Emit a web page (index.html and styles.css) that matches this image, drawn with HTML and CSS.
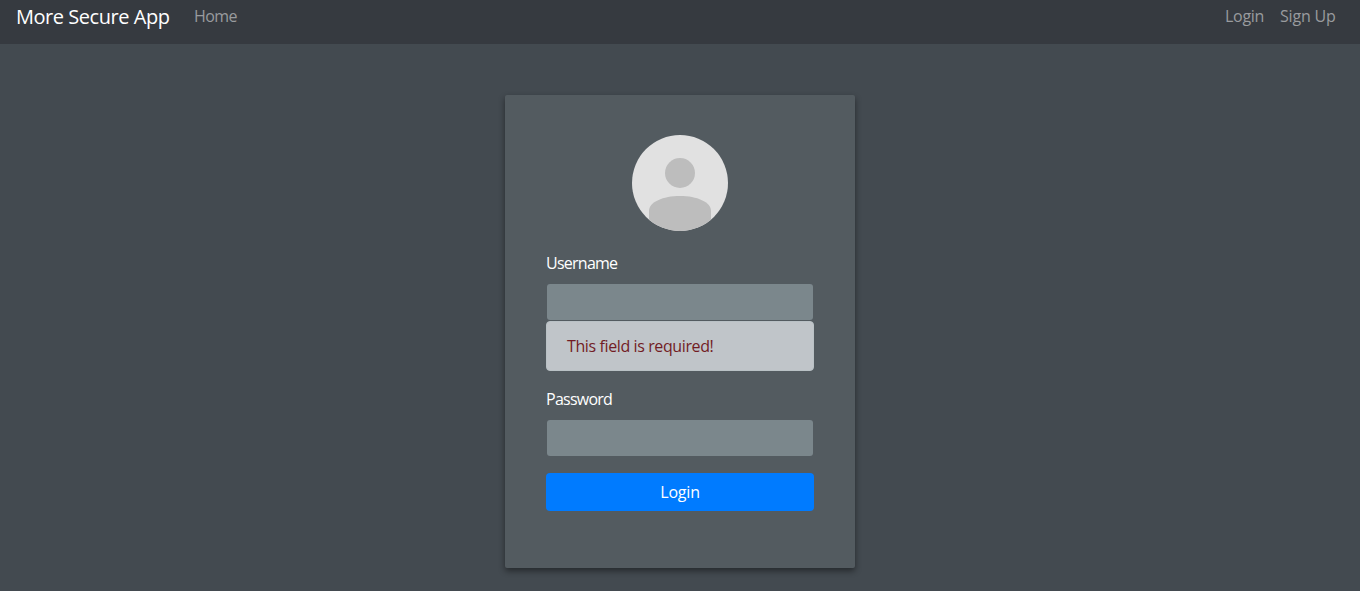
FILE: index.html
```html
<!DOCTYPE html>
<html lang="en">
<head>
<meta charset="utf-8">
<title>More Secure App</title>
<link rel="stylesheet" href="styles.css">
</head>
<body>
<nav class="navbar">
  <a class="brand">More Secure App</a>
  <a class="nav-link home">Home</a>
  <div class="nav-right"><a class="nav-link login">Login</a><a class="nav-link signup">Sign Up</a></div>
</nav>
<main class="card">
  <svg class="avatar" viewBox="0 0 96 96">
    <defs><clipPath id="disc"><circle cx="48" cy="48" r="48"/></clipPath></defs>
    <g clip-path="url(#disc)">
      <rect width="96" height="96" fill="#e1e1e1"/>
      <circle cx="48" cy="38" r="15" fill="#bdbdbd"/>
      <path d="M17 96V76C17 67 31 61 48 61s31 6 31 15v20z" fill="#bdbdbd"/>
    </g>
  </svg>
  <form class="form">
    <div class="group">
      <label class="label username" for="username">Username</label>
      <input class="input" id="username" type="text">
      <div class="alert"><span class="message">This field is required!</span></div>
    </div>
    <div class="group">
      <label class="label password" for="password">Password</label>
      <input class="input" id="password" type="password">
    </div>
    <button class="button" type="button">Login</button>
  </form>
</main>
</body>
</html>
```
FILE: styles.css
```css
* { box-sizing: border-box; }
body {
  margin: 0;
  height: 591px;
  overflow: hidden;
  background: #434a50;
  font: 16px/24px "Segoe UI", "Open Sans", "Noto Sans", sans-serif;
  color: #fff;
}
.navbar {
  display: flex;
  align-items: flex-start;
  height: 44px;
  padding: 0 24px 0 16px;
  background: #363a40;
}
.brand { width: 154px; margin-right: 24px; padding-top: 2px; font-size: 20px; line-height: 30px; letter-spacing: -0.46px; white-space: nowrap; }
.nav-link { padding-top: 4px; color: #999b9e; white-space: nowrap; }
.home { letter-spacing: -0.6px; }
.nav-right { display: flex; gap: 16px; margin-left: auto; }
.login { width: 39px; letter-spacing: -0.3px; }
.signup { width: 56px; letter-spacing: -0.2px; }
.card {
  width: 350px;
  height: 473px;
  margin: 51px auto 0;
  padding: 40px 41px;
  border-radius: 2px;
  background: #535b60;
  box-shadow: 0 3px 6px rgba(0, 0, 0, 0.45);
}
.avatar { display: block; width: 96px; height: 96px; margin: 0 auto 20px; }
.group { margin-bottom: 16px; }
.label { display: block; margin-bottom: 8px; letter-spacing: -0.75px; }
.input {
  display: block;
  width: 100%;
  height: 38px;
  padding: 6px 12px;
  border: 1px solid transparent;
  border-radius: 4px;
  background: #7b878c padding-box;
  color: #fff;
  font: inherit;
}
.alert {
  height: 50px;
  padding: 12px 20px;
  border: 1px solid #b9c1c5;
  border-radius: 4px;
  background: #c0c5c9;
  color: #721c24;
  letter-spacing: -0.39px;
}
.button {
  display: block;
  width: 100%;
  height: 38px;
  padding: 6px 12px;
  border: 0;
  border-radius: 4px;
  background: #007bff;
  color: #fff;
  font: inherit;
  letter-spacing: -0.2px;
}
```
